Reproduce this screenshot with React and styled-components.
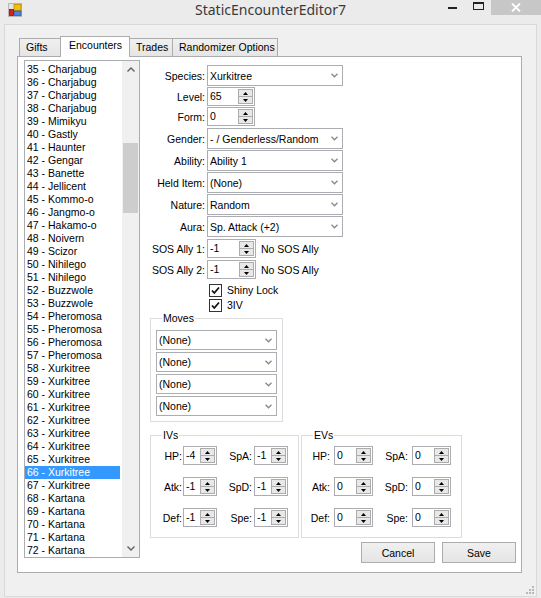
import React from "react";
import styled, { createGlobalStyle } from "styled-components";

const entries = [
  [35, "Charjabug"], [36, "Charjabug"], [37, "Charjabug"], [38, "Charjabug"],
  [39, "Mimikyu"], [40, "Gastly"], [41, "Haunter"], [42, "Gengar"],
  [43, "Banette"], [44, "Jellicent"], [45, "Kommo-o"], [46, "Jangmo-o"],
  [47, "Hakamo-o"], [48, "Noivern"], [49, "Scizor"], [50, "Nihilego"],
  [51, "Nihilego"], [52, "Buzzwole"], [53, "Buzzwole"], [54, "Pheromosa"],
  [55, "Pheromosa"], [56, "Pheromosa"], [57, "Pheromosa"], [58, "Xurkitree"],
  [59, "Xurkitree"], [60, "Xurkitree"], [61, "Xurkitree"], [62, "Xurkitree"],
  [63, "Xurkitree"], [64, "Xurkitree"], [65, "Xurkitree"], [66, "Xurkitree"],
  [67, "Xurkitree"], [68, "Kartana"], [69, "Kartana"], [70, "Kartana"],
  [71, "Kartana"], [72, "Kartana"],
];

const tabs = [
  { name: "Gifts", w: 42 },
  { name: "Encounters", w: 70, active: true },
  { name: "Trades", w: 44 },
  { name: "Randomizer Options", w: 106 },
];

const fields = [
  { label: "Species:", kind: "combo", value: "Xurkitree", h: 21, mt: 0 },
  { label: "Level:", kind: "num", value: "65", h: 19, mt: 1 },
  { label: "Form:", kind: "num", value: "0", h: 19, mt: 1 },
  { label: "Gender:", kind: "combo", value: "- / Genderless/Random", h: 21, mt: 2 },
  { label: "Ability:", kind: "combo", value: "Ability 1", h: 21, mt: 1 },
  { label: "Held Item:", kind: "combo", value: "(None)", h: 21, mt: 1 },
  { label: "Nature:", kind: "combo", value: "Random", h: 21, mt: 1 },
  { label: "Aura:", kind: "combo", value: "Sp. Attack (+2)", h: 21, mt: 1 },
  { label: "SOS Ally 1:", kind: "sos", value: "-1", h: 19, mt: 2 },
  { label: "SOS Ally 2:", kind: "sos", value: "-1", h: 19, mt: 2 },
];

const ivs = [["HP:", "-4", "SpA:", "-1"], ["Atk:", "-1", "SpD:", "-1"], ["Def:", "-1", "Spe:", "-1"]];
const evs = [["HP:", "0", "SpA:", "0"], ["Atk:", "0", "SpD:", "0"], ["Def:", "0", "Spe:", "0"]];

const Chevron = () => (
  <svg width="7" height="5" viewBox="0 0 7 5">
    <path d="M0.5 0.8 L3.5 3.8 L6.5 0.8" fill="none" stroke="#888" strokeWidth="1.3" />
  </svg>
);

const Combo = ({ value, width }) => (
  <ComboBox $w={width}>
    <ComboText>{value}</ComboText>
    <Chevron />
  </ComboBox>
);

const Numeric = ({ value, width }) => (
  <NumBox $w={width}>
    <NumText>{value}</NumText>
    <Spin>
      <SpinBtn>
        <svg width="5" height="3" viewBox="0 0 5 3"><path d="M0 3 L2.5 0 L5 3 Z" fill="#000" /></svg>
      </SpinBtn>
      <SpinBtn>
        <svg width="5" height="3" viewBox="0 0 5 3"><path d="M0 0 L2.5 3 L5 0 Z" fill="#000" /></svg>
      </SpinBtn>
    </Spin>
  </NumBox>
);

const Check = ({ label }) => (
  <CheckRow>
    <CheckBox>
      <svg width="11" height="11" viewBox="0 0 11 11">
        <path d="M2 5.5 L4.3 8 L9 2.5" fill="none" stroke="#111" strokeWidth="1.8" />
      </svg>
    </CheckBox>
    <span>{label}</span>
  </CheckRow>
);

const StatGroup = ({ title, rows, cols, width, ml }) => (
  <Group $w={width} $ml={ml}>
    <Legend>{title}</Legend>
    <StatGrid $cols={cols}>
      {rows.map((r) => (
        <React.Fragment key={r[0]}>
          <StatLabel $pr={cols.pr1}>{r[0]}</StatLabel>
          <Numeric value={r[1]} width={cols.num} />
          <StatLabel $pr={cols.pr2}>{r[2]}</StatLabel>
          <Numeric value={r[3]} width={cols.num} />
        </React.Fragment>
      ))}
    </StatGrid>
  </Group>
);

const App = () => {
  return (
    <>
      <GlobalStyle />
      <Window>
        <TitleBar>
          <TitleSide>
            <AppIcon>
              <svg width="14" height="14" viewBox="0 0 14 14">
                <rect x="0.5" y="0.5" width="13" height="13" fill="#e4e4e4" stroke="#b8b8b8" />
                <rect x="6" y="1.5" width="7" height="6" fill="#f2c200" stroke="#c08a00" strokeWidth="0.8" />
                <rect x="6" y="8" width="7" height="4.5" fill="#4a86d8" stroke="#2a5aa8" strokeWidth="0.8" />
                <rect x="1.5" y="6.5" width="4" height="6" fill="#d42020" stroke="#901010" strokeWidth="0.8" />
              </svg>
            </AppIcon>
          </TitleSide>
          <Title>StaticEncounterEditor7</Title>
          <TitleSide $right>
            <CaptionBtn $pt={7}>
              <MinGlyph />
            </CaptionBtn>
            <CaptionBtn $pt={2}>
              <MaxGlyph />
            </CaptionBtn>
            <CloseBtn>
              <svg width="10" height="9" viewBox="0 0 10 9">
                <path d="M1 0.5 L9 8.5 M9 0.5 L1 8.5" stroke="#fff" strokeWidth="1.8" />
              </svg>
            </CloseBtn>
          </TitleSide>
        </TitleBar>
        <Client>
          <TabStrip>
            {tabs.map((t) => (
              <Tab key={t.name} $w={t.w} $active={t.active}>
                {t.name}
              </Tab>
            ))}
          </TabStrip>
          <Panel>
            <ListBox>
              <ListItems>
                {entries.map(([n, name]) => (
                  <ListItem key={n} $selected={n === 66}>
                    {n} - {name}
                  </ListItem>
                ))}
              </ListItems>
              <ScrollBar>
                <ScrollArrow>
                  <svg width="8" height="5" viewBox="0 0 8 5">
                    <path d="M0.5 4.5 L4 1 L7.5 4.5" fill="none" stroke="#606060" strokeWidth="1.4" />
                  </svg>
                </ScrollArrow>
                <ScrollTrack>
                  <Thumb />
                </ScrollTrack>
                <ScrollArrow>
                  <svg width="8" height="5" viewBox="0 0 8 5">
                    <path d="M0.5 0.5 L4 4 L7.5 0.5" fill="none" stroke="#606060" strokeWidth="1.4" />
                  </svg>
                </ScrollArrow>
              </ScrollBar>
            </ListBox>
            <Form>
              {fields.map((f) => (
                <FieldRow key={f.label} $h={f.h} $mt={f.mt}>
                  <FieldLabel>{f.label}</FieldLabel>
                  {f.kind === "combo" && <Combo value={f.value} width={136} />}
                  {f.kind === "num" && <Numeric value={f.value} width={48} />}
                  {f.kind === "sos" && (
                    <>
                      <Numeric value={f.value} width={49} />
                      <SosNote>No SOS Ally</SosNote>
                    </>
                  )}
                </FieldRow>
              ))}
              <Checks>
                <Check label="Shiny Lock" />
                <Check label="3IV" />
              </Checks>
              <Group $w={133} $ml={4}>
                <Legend>Moves</Legend>
                <MoveList>
                  {[0, 1, 2, 3].map((i) => (
                    <MoveSlot key={i}>
                      <Combo value="(None)" width={121} />
                    </MoveSlot>
                  ))}
                </MoveList>
              </Group>
              <StatsRow>
                <StatGroup
                  title="IVs"
                  rows={ivs}
                  width={149}
                  cols={{ l1: 32, l2: 37, num: 34, pr1: 1, pr2: 2 }}
                />
                <StatGroup
                  title="EVs"
                  rows={evs}
                  width={161}
                  ml={2}
                  cols={{ l1: 32, l2: 39, num: 39, pr1: 4, pr2: 4 }}
                />
              </StatsRow>
              <Buttons>
                <Button>Cancel</Button>
                <Button>Save</Button>
              </Buttons>
            </Form>
          </Panel>
          <Footer>
            <svg width="10" height="10" viewBox="0 0 10 10">
              {[[8, 0], [8, 3], [5, 3], [8, 6], [5, 6], [2, 6]].map(([x, y]) => (
                <rect key={`${x}-${y}`} x={x} y={y + 2} width="2" height="2" fill="#b8b8b8" />
              ))}
            </svg>
          </Footer>
        </Client>
      </Window>
    </>
  );
};

const GlobalStyle = createGlobalStyle`
  body {
    margin: 0;
    background: #ebebeb;
    font-family: "Liberation Sans", Arial, sans-serif;
    font-size: 10.5px;
    color: #000;
  }
`;

const Window = styled.div`
  width: 541px;
  height: 598px;
  background: #ebebeb;
  display: flex;
  flex-direction: column;
  overflow: hidden;
`;

const TitleBar = styled.div`
  height: 24px;
  flex-shrink: 0;
  display: flex;
  align-items: flex-start;
`;

const TitleSide = styled.div`
  width: 102px;
  flex-shrink: 0;
  display: flex;
  justify-content: ${(p) => (p.$right ? "flex-end" : "flex-start")};
  align-items: flex-start;
`;

const AppIcon = styled.div`
  padding: 3px 0 0 8px;
  line-height: 0;
`;

const Title = styled.div`
  flex: 1;
  text-align: center;
  font-family: "Noto Sans", "Open Sans", sans-serif;
  font-size: 14px;
  line-height: 20px;
  color: #3a3a3a;
`;

const CaptionBtn = styled.div`
  width: 26px;
  flex-shrink: 0;
  height: 16px;
  box-sizing: border-box;
  padding-top: ${(p) => p.$pt}px;
  display: flex;
  justify-content: center;
  align-items: flex-start;
`;

const MinGlyph = styled.div`
  width: 9px;
  height: 2px;
  background: #222;
`;

const MaxGlyph = styled.div`
  width: 11px;
  height: 8px;
  box-sizing: border-box;
  border: 1px solid #222;
  border-top-width: 2px;
`;

const CloseBtn = styled.div`
  width: 50px;
  flex-shrink: 0;
  height: 15px;
  background: #c7c7c7;
  display: flex;
  justify-content: center;
  align-items: center;
`;

const Client = styled.div`
  margin-left: 4px;
  width: 533px;
  flex: 1;
  margin-bottom: 1px;
  box-sizing: border-box;
  border: 1px solid #d9d9d9;
  background: #f0f0f0;
  padding: 11px 0 0 12px;
  display: flex;
  flex-direction: column;
`;

const TabStrip = styled.div`
  display: flex;
  align-items: flex-end;
  height: 20px;
  padding-left: 2px;
`;

const Tab = styled.div`
  width: ${(p) => p.$w}px;
  height: ${(p) => (p.$active ? 21 : 18)}px;
  margin-left: -1px;
  margin-bottom: ${(p) => (p.$active ? -1 : 0)}px;
  box-sizing: border-box;
  border: 1px solid #acacac;
  border-bottom: none;
  background: ${(p) => (p.$active ? "#fff" : "linear-gradient(#f0f0f0, #e5e5e5)")};
  padding: ${(p) => (p.$active ? "2px 0 0 8px" : "2px 0 0 6px")};
  line-height: 13px;
  white-space: nowrap;
  position: relative;
  z-index: ${(p) => (p.$active ? 1 : 0)};

  &:first-child {
    margin-left: 0;
  }
`;

const Panel = styled.div`
  width: 505px;
  height: 517px;
  box-sizing: border-box;
  border: 1px solid #acacac;
  background: #fff;
  padding: 3px 6px 0 6px;
  display: flex;
  gap: 6px;
`;

const ListBox = styled.div`
  width: 116px;
  height: 498px;
  box-sizing: border-box;
  border: 1px solid #abadb3;
  display: flex;
  flex-shrink: 0;
  overflow: hidden;
`;

const ListItems = styled.div`
  flex: 1;
  padding-top: 2px;
  overflow: hidden;
`;

const ListItem = styled.div`
  height: 13px;
  line-height: 13px;
  padding-left: 2px;
  margin-right: 2px;
  white-space: nowrap;
  background: ${(p) => (p.$selected ? "#3399ff" : "transparent")};
  color: ${(p) => (p.$selected ? "#fff" : "#000")};
`;

const ScrollBar = styled.div`
  width: 17px;
  display: flex;
  flex-direction: column;
  background: #f0f0f0;
`;

const ScrollArrow = styled.div`
  height: 17px;
  display: flex;
  align-items: center;
  justify-content: center;
`;

const ScrollTrack = styled.div`
  flex: 1;
  padding: 65px 1px 0 1px;
`;

const Thumb = styled.div`
  height: 70px;
  background: #cdcdcd;
`;

const Form = styled.div`
  flex: 1;
  padding-top: 5px;
  display: flex;
  flex-direction: column;
`;

const FieldRow = styled.div`
  display: flex;
  align-items: center;
  height: ${(p) => p.$h}px;
  margin-top: ${(p) => p.$mt}px;
`;

const FieldLabel = styled.div`
  width: 59px;
  margin-right: 2px;
  text-align: right;
  white-space: nowrap;
`;

const ComboBox = styled.div`
  width: ${(p) => p.$w}px;
  height: 100%;
  box-sizing: border-box;
  border: 1px solid #abadb3;
  background: #fff;
  display: flex;
  align-items: center;
  padding: 0 4px 0 2px;
`;

const ComboText = styled.span`
  flex: 1;
  white-space: nowrap;
  overflow: hidden;
`;

const NumBox = styled.div`
  width: ${(p) => p.$w}px;
  height: 19px;
  box-sizing: border-box;
  border: 1px solid #abadb3;
  background: #fff;
  display: flex;
  align-items: stretch;
`;

const NumText = styled.span`
  flex: 1;
  padding-left: 2px;
  line-height: 17px;
  white-space: nowrap;
`;

const Spin = styled.div`
  width: 15px;
  margin: 1px 1px 1px 0;
  display: flex;
  flex-direction: column;
`;

const SpinBtn = styled.div`
  flex: 1;
  box-sizing: border-box;
  border: 1px solid #acacac;
  background: #e8e8e8;
  display: flex;
  align-items: center;
  justify-content: center;

  & + & {
    border-top: none;
  }
`;

const SosNote = styled.span`
  margin-left: 5px;
`;

const Checks = styled.div`
  display: flex;
  flex-direction: column;
  margin-top: 4px;
  padding-left: 63px;
  gap: 1px;
`;

const CheckRow = styled.div`
  display: flex;
  align-items: center;
  gap: 5px;
  height: 14px;
`;

const CheckBox = styled.div`
  width: 13px;
  height: 13px;
  box-sizing: border-box;
  border: 1px solid #333;
  background: #fff;
  display: flex;
  align-items: center;
  justify-content: center;
`;

const Group = styled.fieldset`
  width: ${(p) => p.$w}px;
  margin: 0 0 0 ${(p) => p.$ml || 0}px;
  box-sizing: border-box;
  border: 1px solid #dcdcdc;
  padding: 0 5px 5px 5px;
  min-width: 0;
`;

const Legend = styled.legend`
  padding: 0 1px;
  margin-left: 6px;
  line-height: 13px;
`;

const MoveList = styled.div`
  display: flex;
  flex-direction: column;
  gap: 2px;
  padding-top: 5px;
`;

const MoveSlot = styled.div`
  height: 20px;
`;

const StatsRow = styled.div`
  display: flex;
  margin-top: 7px;
  margin-left: 4px;
`;

const StatGrid = styled.div`
  display: grid;
  grid-template-columns: ${(p) => `${p.$cols.l1}px ${p.$cols.num}px ${p.$cols.l2}px ${p.$cols.num}px`};
  grid-auto-rows: 19px;
  row-gap: 12px;
  align-items: center;
  padding: 4px 0 5px 0;
  margin-left: -5px;
`;

const StatLabel = styled.div`
  text-align: right;
  padding-right: ${(p) => p.$pr}px;
`;

const Buttons = styled.div`
  display: flex;
  justify-content: flex-end;
  gap: 7px;
  margin-top: 4px;
  margin-right: -1px;
`;

const Button = styled.div`
  width: 74px;
  height: 21px;
  box-sizing: border-box;
  border: 1px solid #acacac;
  background: linear-gradient(#f0f0f0, #e5e5e5);
  display: flex;
  align-items: center;
  justify-content: center;
`;

const Footer = styled.div`
  flex: 1;
  display: flex;
  justify-content: flex-end;
  align-items: flex-end;
  padding: 0 2px 2px 0;
`;

export default App;
